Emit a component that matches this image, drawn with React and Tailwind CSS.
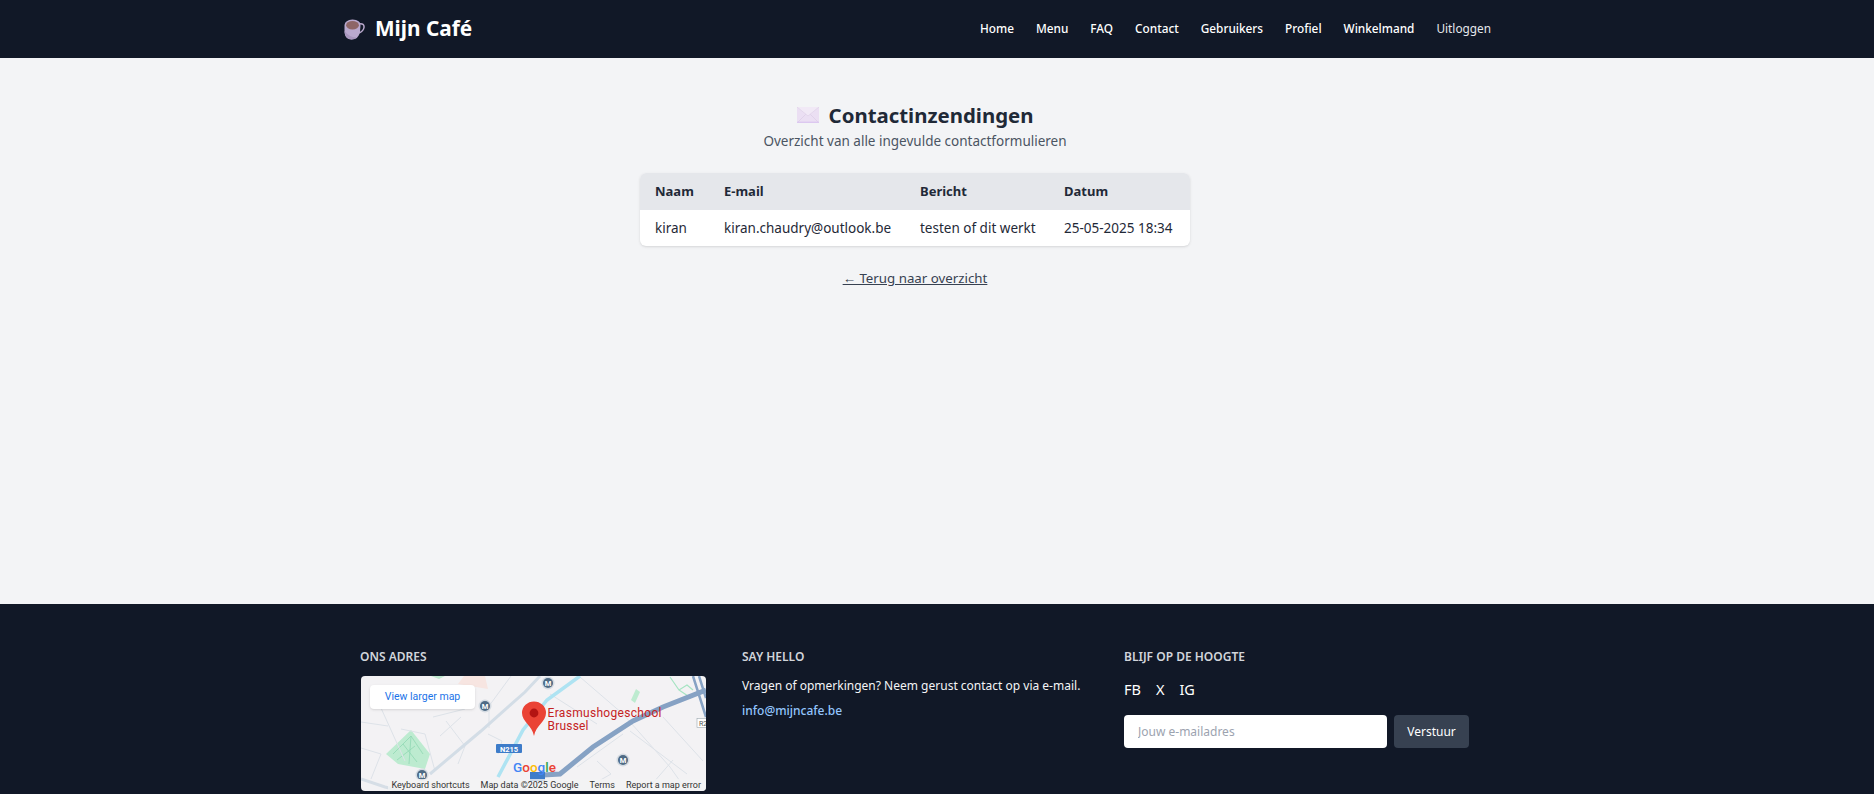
const F = "font-['Noto_Sans','Open_Sans',sans-serif]";

function Cup() {
  return (
    <svg width="21" height="21" viewBox="0 0 21 21" className="shrink-0">
      <path d="M15 5 Q20.5 4 20 8.5 Q19.5 12 15 14" fill="none" stroke="#b9a8cc" strokeWidth="1.5" />
      <path d="M0.5 6 Q1 1 8.5 0.5 Q16.5 1 16.5 6 L16 13 Q14.5 20.5 7.5 20.5 Q1.5 20.5 0.5 14 Z" fill="#baa9ce" />
      <path d="M0.5 12 Q1.5 20.5 7.5 20.5 Q11 20.5 13 18.5 Q6 19 0.5 12Z" fill="#a896bd" />
      <ellipse cx="8.5" cy="6.2" rx="6.4" ry="4.2" fill="#8e6666" />
    </svg>
  );
}

function Envelope() {
  return (
    <svg width="22" height="16" viewBox="0 0 22 16" className="shrink-0">
      <rect x="0" y="0" width="22" height="16" fill="#ebdff3" />
      <path d="M0 0 L11 9 L22 0Z" fill="#f1e9f6" />
      <path d="M0 16 L9 7 M22 16 L13 7" stroke="#e0d2ea" strokeWidth="1" fill="none" />
      <path d="M0 0 L11 9 L22 0" stroke="#e3d7ec" strokeWidth="1" fill="none" />
      <rect x="0" y="14.6" width="22" height="1.4" fill="#dcc8f0" />
    </svg>
  );
}

function MetroDot({ x, y }) {
  return (
    <g>
      <circle cx={x} cy={y} r="6.5" fill="#d4dbe2" />
      <circle cx={x} cy={y} r="5" fill="#4f6b85" />
      <text x={x} y={y + 2.6} textAnchor="middle" fontSize="7.5" fontWeight="700" fill="#fff" fontFamily="Roboto, sans-serif">M</text>
    </g>
  );
}

function MapArt() {
  return (
    <svg viewBox="0 0 345 115" className="block h-full w-full" preserveAspectRatio="none">
      <rect width="345" height="115" fill="#f3f2f4" />
      <path d="M103 0 L124 0 L127 13 L97 8Z" fill="#f7e5e1" />
      <path d="M70 0 L84 0 L78 3Z" fill="#bfe8cf" />
      <path d="M25 78 L50 54 L69 78 L64 93 L37 88Z" fill="#bdebd0" />
      <path d="M32 78 L50 60 L62 78 M42 68 L56 86 M36 84 L54 70 M50 60 L48 88" stroke="#8fd8b2" strokeWidth="0.8" fill="none" />
      <path d="M309 1 L318 14 L326 9 L332 14 M318 14 L330 22" stroke="#a5e4c2" strokeWidth="1.2" fill="none" />
      <path d="M270 24 L275 13 L279 16 L274 27Z" fill="#bdebd0" />
      <g fill="none" stroke="#dde2e8" strokeWidth="1">
        <path d="M0 46 L27 50" />
        <path d="M20 32 L44 85" />
        <path d="M72 41 L104 33" />
        <path d="M79 60 L100 41" />
        <path d="M85 45 L104 70 L97 88" />
        <path d="M40 53 L64 58 L74 95" />
        <path d="M127 58 L141 65 L137 78" />
        <path d="M219 1 L262 38 L309 91 L326 115" />
        <path d="M189 18 L236 48" />
        <path d="M269 55 L326 98" />
        <path d="M302 41 L342 85" />
        <path d="M216 91 L262 58" />
        <path d="M236 85 L250 98 L236 106" />
        <path d="M150 0 L128 30 L128 52" />
        <path d="M0 72 L20 78 L10 103" />
        <path d="M285 115 L312 84" />
      </g>
      <path d="M0 103 L24 111 L40 115" stroke="#d6dee6" strokeWidth="3" fill="none" />
      <path d="M179 0 L164 16 L120 55 L69 98" stroke="#d3dde6" strokeWidth="3" fill="none" />
      <path d="M219 0 L186 24 L162 54 L137 101" stroke="#aee3f2" strokeWidth="3.5" fill="none" />
      <path d="M182 99 L199 98 L232 71 L272 45 L302 31 L345 14" stroke="#86a2c4" strokeWidth="5" fill="none" />
      <path d="M332 0 L345 41 M338 0 L345 22" stroke="#86a2c4" strokeWidth="2.5" fill="none" />
      <MetroDot x={187} y={7} />
      <MetroDot x={124} y={30} />
      <MetroDot x={262} y={84} />
      <MetroDot x={61} y={99} />
      <rect x="135" y="68" width="26" height="9" fill="#3d7cc9" rx="1" />
      <text x="148" y="75.5" textAnchor="middle" fontSize="7.5" fontWeight="700" fill="#fff" fontFamily="Roboto, sans-serif">N215</text>
      <rect x="169" y="96" width="15" height="9" fill="#3d7cc9" />
      <rect x="336" y="42.5" width="10" height="9" fill="#fff" stroke="#9aa5ad" strokeWidth="0.6" />
      <text x="338" y="50" fontSize="7" fill="#555" fontFamily="Roboto, sans-serif">R2</text>
      <path d="M173 60 C171 49 161 46 161 37 A12 11.5 0 0 1 185 37 C185 46 175 49 173 60Z" fill="#ea4335" />
      <circle cx="173" cy="37" r="4.4" fill="#b31412" />
      <text x="186.5" y="41" fontSize="12" fill="#c5221f" fontFamily="Roboto, sans-serif" textLength="114">Erasmushogeschool</text>
      <text x="186.5" y="54" fontSize="12" fill="#c5221f" fontFamily="Roboto, sans-serif" textLength="41">Brussel</text>
      <text x="152" y="96" fontSize="13.5" fontFamily="Roboto, sans-serif" fontWeight="500">
        <tspan fill="#4285f4">G</tspan><tspan fill="#ea4335">o</tspan><tspan fill="#fbbc05">o</tspan><tspan fill="#4285f4">g</tspan><tspan fill="#34a853">l</tspan><tspan fill="#ea4335">e</tspan>
      </text>
    </svg>
  );
}

export default function App() {
  const links = ["Home", "Menu", "FAQ", "Contact", "Gebruikers", "Profiel", "Winkelmand"];
  return (
    <div className={`flex h-[794px] flex-col overflow-hidden bg-[#f3f4f6] ${F}`}>
      <header className="h-[58px] shrink-0 bg-[#111827]">
        <div className="mx-[339px] flex h-full w-[1152px] items-center justify-between">
          <div className="flex items-center gap-[10px] pl-[5px]">
            <Cup />
            <span className="text-[20.8px] font-bold text-white">Mijn Café</span>
          </div>
          <nav className="flex items-center gap-[22px] text-[11.8px] text-white">
            {links.map((l) => (
              <a key={l} className="font-medium">{l}</a>
            ))}
            <a className="text-[#e5e7eb]">Uitloggen</a>
          </nav>
        </div>
      </header>

      <main className="flex-1">
        <div className="ml-[339px] flex w-[1152px] flex-col items-center pt-[43px]">
          <div className="flex items-center gap-[10px]">
            <Envelope />
            <h1 className="text-[20.4px] leading-[28px] font-bold text-[#1f2937]">Contactinzendingen</h1>
          </div>
          <p className="mt-[2px] text-[13.5px] leading-[20px] text-[#4b5563]">Overzicht van alle ingevulde contactformulieren</p>
          <table className="mt-[22px] w-[550px] table-fixed overflow-hidden rounded-md bg-white text-left text-[13.5px] text-[#1f2937] shadow">
            <thead className="bg-[#e5e7eb] text-[13px]">
              <tr className="h-[37px]">
                <th className="w-[84px] pl-[15px] font-bold">Naam</th>
                <th className="w-[196px] font-bold">E-mail</th>
                <th className="w-[144px] font-bold">Bericht</th>
                <th className="font-bold">Datum</th>
              </tr>
            </thead>
            <tbody>
              <tr className="h-[36px]">
                <td className="pl-[15px]">kiran</td>
                <td>kiran.chaudry@outlook.be</td>
                <td>testen of dit werkt</td>
                <td>25-05-2025 18:34</td>
              </tr>
            </tbody>
          </table>
          <a className="mt-[22px] text-[13.3px] leading-[20px] text-[#374151] underline">← Terug naar overzicht</a>
        </div>
      </main>

      <footer className="h-[190px] shrink-0 bg-[#111827]">
        <div className="ml-[360px] flex w-[1110px] gap-[36px] pt-[44px]">
          <div className="w-[346px]">
            <h3 className="text-[12px] leading-[18px] font-semibold text-[#d1d5db] uppercase">Ons adres</h3>
            <div className="relative mt-[10px] ml-[1px] h-[115px] w-[345px] overflow-hidden rounded">
              <MapArt />
              <a className="absolute top-[9px] left-[9px] flex h-[24px] w-[105px] items-center justify-center rounded-sm bg-white font-['Roboto',sans-serif] text-[10.5px] text-[#1a73e8] shadow-sm">View larger map</a>
              <div className="absolute right-0 bottom-0 flex gap-[11px] bg-[#f3f2f4]/80 pr-[5px] pl-[3px] font-['Roboto',sans-serif] text-[9px] leading-[12px] text-[#333]">
                <span>Keyboard shortcuts</span>
                <span>Map data ©2025 Google</span>
                <span>Terms</span>
                <span>Report a map error</span>
              </div>
            </div>
          </div>
          <div className="w-[346px]">
            <h3 className="text-[12px] leading-[18px] font-semibold text-[#d1d5db] uppercase">Say hello</h3>
            <p className="mt-[11px] text-[12px] leading-[18px] text-[#f3f4f6]">Vragen of opmerkingen? Neem gerust contact op via e-mail.</p>
            <a className="mt-[7px] block text-[12px] leading-[18px] font-medium text-[#93c5fd]">info@mijncafe.be</a>
          </div>
          <div className="flex-1">
            <h3 className="text-[12px] leading-[18px] font-semibold text-[#d1d5db] uppercase">Blijf op de hoogte</h3>
            <div className="mt-[13px] flex gap-[15px] text-[14.5px] leading-[20px] text-white">
              <span>FB</span><span>X</span><span>IG</span>
            </div>
            <div className="mt-[16px] flex gap-[7px]">
              <input placeholder="Jouw e-mailadres" className="h-[33px] w-[263px] rounded bg-white px-[14px] text-[12px] placeholder:text-[#9ca3af]" />
              <button className="h-[33px] w-[75px] rounded bg-[#374151] text-[12px] text-white">Verstuur</button>
            </div>
          </div>
        </div>
      </footer>
    </div>
  );
}
